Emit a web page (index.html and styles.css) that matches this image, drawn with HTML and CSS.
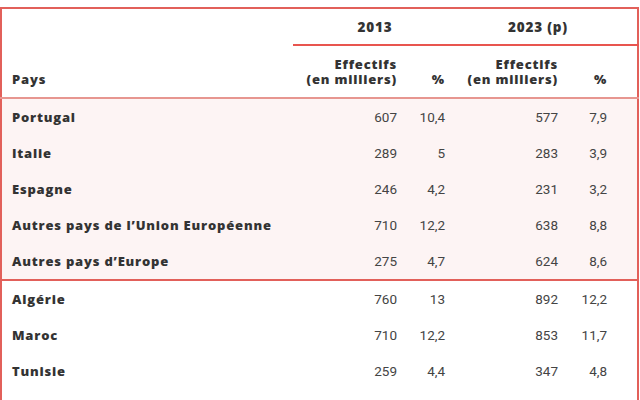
FILE: index.html
```html
<!DOCTYPE html>
<html lang="fr">
<head>
<meta charset="utf-8">
<link rel="stylesheet" href="styles.css">
</head>
<body>
<table class="data">
  <colgroup>
    <col class="c-pays"><col class="c-eff"><col class="c-pct"><col class="c-eff2"><col class="c-pct2"><col class="c-pad">
  </colgroup>
  <thead>
    <tr class="years">
      <th class="blank"></th>
      <th colspan="2" class="year">2013</th>
      <th colspan="2" class="year">2023 (p)</th>
      <th class="year"></th>
    </tr>
    <tr class="labels">
      <th class="lbl-pays">Pays</th>
      <th class="num">Effectifs<br>(en milliers)</th>
      <th class="num">%</th>
      <th class="num">Effectifs<br>(en milliers)</th>
      <th class="num">%</th>
      <th></th>
    </tr>
  </thead>
  <tbody class="europe">
    <tr><th>Portugal</th><td>607</td><td>10,4</td><td>577</td><td>7,9</td><td></td></tr>
    <tr><th>Italie</th><td>289</td><td>5</td><td>283</td><td>3,9</td><td></td></tr>
    <tr><th>Espagne</th><td>246</td><td>4,2</td><td>231</td><td>3,2</td><td></td></tr>
    <tr><th>Autres pays de l’Union Européenne</th><td>710</td><td>12,2</td><td>638</td><td>8,8</td><td></td></tr>
    <tr><th>Autres pays d’Europe</th><td>275</td><td>4,7</td><td>624</td><td>8,6</td><td></td></tr>
  </tbody>
  <tbody class="maghreb">
    <tr><th>Algérie</th><td>760</td><td>13</td><td>892</td><td>12,2</td><td></td></tr>
    <tr><th>Maroc</th><td>710</td><td>12,2</td><td>853</td><td>11,7</td><td></td></tr>
    <tr><th>Tunisie</th><td>259</td><td>4,4</td><td>347</td><td>4,8</td><td></td></tr>
    <tr><th>&nbsp;</th><td></td><td></td><td></td><td></td><td></td></tr>
  </tbody>
</table>
</body>
</html>
```
FILE: styles.css
```css
html, body {
  margin: 0;
  background: #ffffff;
}
body {
  padding-top: 7px;
}
.data {
  table-layout: fixed;
  width: 639px;
  border-collapse: collapse;
  border: 2px solid #e2605a;
  color: #333333;
}
.c-pays { width: 292px; }
.c-eff { width: 116px; }
.c-pct { width: 48px; }
.c-eff2 { width: 113px; }
.c-pct2 { width: 49px; }
.c-pad { width: 19px; }

.data th {
  font-family: "Open Sans", "DejaVu Sans", sans-serif;
  font-weight: 800;
  font-size: 13px;
  letter-spacing: 0.8px;
  text-align: left;
}
.data td {
  font-family: Roboto, "Liberation Sans", sans-serif;
  font-size: 13.5px;
  color: #444444;
  text-align: right;
  padding: 0 12px 0 0;
  height: 36px;
  line-height: 16px;
}
.years th {
  height: 35px;
  padding: 0;
  text-align: center;
  vertical-align: middle;
  line-height: 16px;
  font-size: 13.5px;
}
.years th.year {
  border-bottom: 2px solid #e8554f;
}
.labels th {
  height: 41px;
  vertical-align: bottom;
  line-height: 15px;
  padding: 0 12px 10px 10px;
  border-bottom: 2px solid #e79690;
}
.labels th.num {
  text-align: right;
  padding-left: 0;
}
tbody th {
  padding: 0 0 0 10px;
  height: 36px;
  line-height: 16px;
  vertical-align: middle;
}
.europe tr {
  background: #fdf4f4;
}
.europe tr:last-child th,
.europe tr:last-child td {
  border-bottom: 2px solid #e2605a;
}
```
